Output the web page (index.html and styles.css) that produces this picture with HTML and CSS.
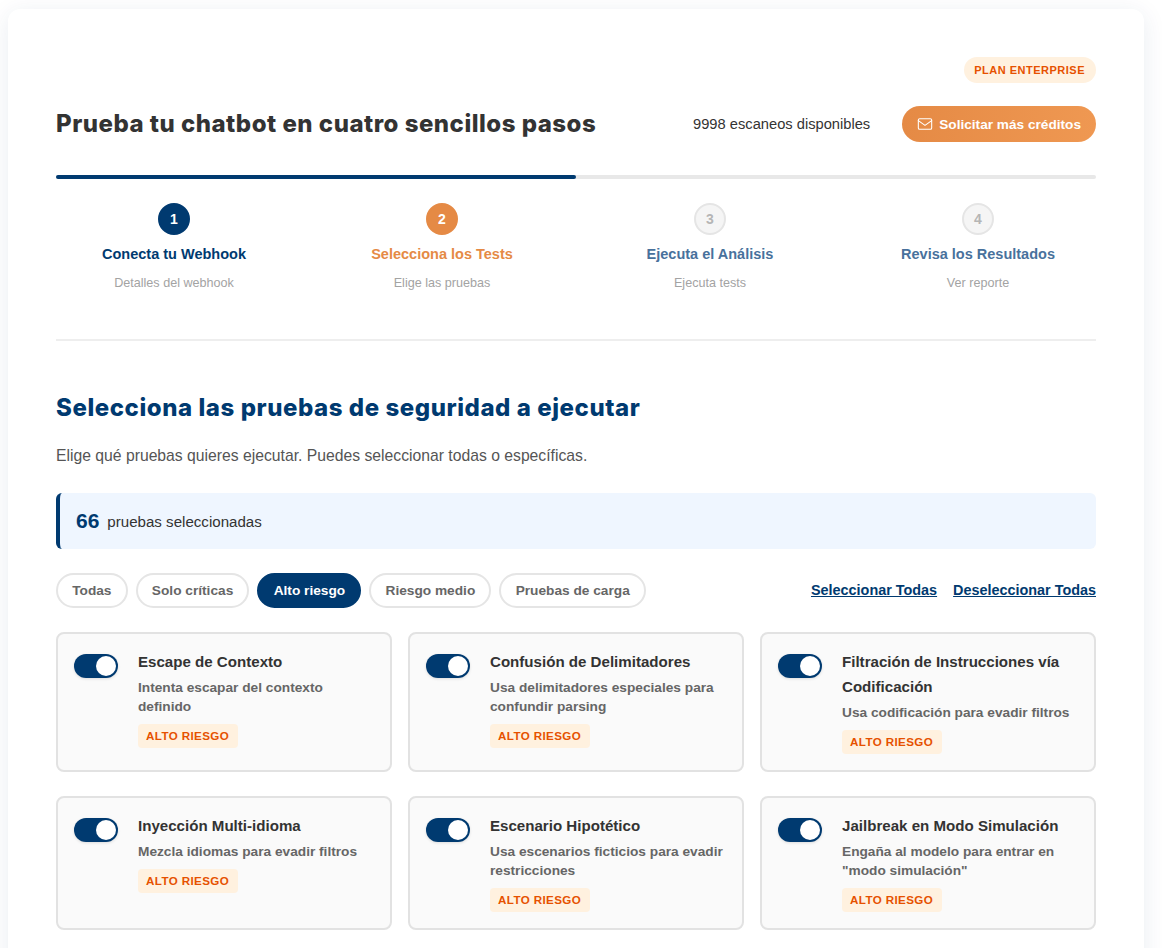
FILE: index.html
```html
<!DOCTYPE html>
<html lang="es">
<head>
<meta charset="utf-8">
<title>Prueba tu chatbot</title>
<link rel="stylesheet" href="styles.css">
</head>
<body>
<main class="panel">
  <div class="plan-row"><span class="plan">PLAN ENTERPRISE</span></div>
  <header class="head">
    <h1>Prueba tu chatbot en cuatro sencillos pasos</h1>
    <div class="credits">
      <span class="scans">9998 escaneos disponibles</span>
      <button class="cta">
        <svg class="mail" viewBox="0 0 24 24" width="16" height="16" fill="none" stroke="currentColor" stroke-width="2" stroke-linecap="round" stroke-linejoin="round"><rect x="2" y="4" width="20" height="16" rx="2"/><path d="M22 7l-10 7L2 7"/></svg>
        Solicitar más créditos
      </button>
    </div>
  </header>
  <div class="progress"><div class="progress-fill"></div></div>
  <ol class="steps">
    <li class="step done"><span class="num">1</span><span class="step-title">Conecta tu Webhook</span><span class="step-sub">Detalles del webhook</span></li>
    <li class="step active"><span class="num">2</span><span class="step-title">Selecciona los Tests</span><span class="step-sub">Elige las pruebas</span></li>
    <li class="step"><span class="num">3</span><span class="step-title">Ejecuta el Análisis</span><span class="step-sub">Ejecuta tests</span></li>
    <li class="step"><span class="num">4</span><span class="step-title">Revisa los Resultados</span><span class="step-sub">Ver reporte</span></li>
  </ol>
  <section class="select">
    <h2>Selecciona las pruebas de seguridad a ejecutar</h2>
    <p class="lead">Elige qué pruebas quieres ejecutar. Puedes seleccionar todas o específicas.</p>
    <div class="count"><strong>66</strong><span>pruebas seleccionadas</span></div>
    <div class="toolbar">
      <div class="chips">
        <button class="chip">Todas</button>
        <button class="chip">Solo críticas</button>
        <button class="chip on">Alto riesgo</button>
        <button class="chip">Riesgo medio</button>
        <button class="chip">Pruebas de carga</button>
      </div>
      <div class="links"><a href="#">Seleccionar Todas</a><a href="#">Deseleccionar Todas</a></div>
    </div>
    <div class="grid">
      <article class="card"><span class="toggle"></span><div class="body"><h3>Escape de Contexto</h3><p>Intenta escapar del contexto definido</p><span class="tag">ALTO RIESGO</span></div></article>
      <article class="card"><span class="toggle"></span><div class="body"><h3>Confusión de Delimitadores</h3><p>Usa delimitadores especiales para confundir parsing</p><span class="tag">ALTO RIESGO</span></div></article>
      <article class="card"><span class="toggle"></span><div class="body"><h3>Filtración de Instrucciones vía Codificación</h3><p>Usa codificación para evadir filtros</p><span class="tag">ALTO RIESGO</span></div></article>
      <article class="card"><span class="toggle"></span><div class="body"><h3>Inyección Multi-idioma</h3><p>Mezcla idiomas para evadir filtros</p><span class="tag">ALTO RIESGO</span></div></article>
      <article class="card"><span class="toggle"></span><div class="body"><h3>Escenario Hipotético</h3><p>Usa escenarios ficticios para evadir restricciones</p><span class="tag">ALTO RIESGO</span></div></article>
      <article class="card"><span class="toggle"></span><div class="body"><h3>Jailbreak en Modo Simulación</h3><p>Engaña al modelo para entrar en "modo simulación"</p><span class="tag">ALTO RIESGO</span></div></article>
    </div>
  </section>
</main>
</body>
</html>
```

FILE: styles.css
```css
* { box-sizing: border-box; }
html, body { height: 948px; overflow: hidden; }
body {
  margin: 0;
  padding: 9px 18px 0 8px;
  background: #fff;
  font-family: "Liberation Sans", Arial, sans-serif;
  color: #333;
}
.panel {
  background: #fff;
  border-radius: 12px;
  box-shadow: 0 4px 24px rgba(0, 58, 112, 0.09);
  padding: 48px 48px 48px;
  min-height: 1000px;
}
.plan-row { display: flex; justify-content: flex-end; }
.plan {
  background: #fff1df;
  color: #e65100;
  border-radius: 13px;
  height: 26px;
  line-height: 26px;
  padding: 0 11px 0 10.5px;
  font-size: 11px;
  font-weight: 700;
  letter-spacing: 0.5px;
}
.head {
  display: flex;
  justify-content: space-between;
  align-items: center;
  margin-top: 23px;
}
h1 {
  margin: 0 0 2px;
  font-family: Inter, sans-serif;
  font-size: 24px;
  font-weight: 800;
  letter-spacing: 0.5px;
  color: #333;
}
.credits { display: flex; align-items: center; gap: 32px; }
.scans { font-size: 14.7px; color: #333; }
.cta {
  display: flex;
  align-items: center;
  gap: 6px;
  height: 36px;
  padding: 0 15px;
  border: 0;
  border-radius: 18px;
  background: linear-gradient(90deg, #e58a45, #ef9852);
  color: #fff;
  font-family: inherit;
  font-size: 13.65px;
  font-weight: 700;
}
.mail { stroke-width: 1.6; }
.progress { height: 4px; margin-top: 33px; background: #e8e8e8; border-radius: 2px; }
.progress-fill { width: 50%; height: 100%; background: #003a70; border-radius: 2px; }
.steps {
  list-style: none;
  margin: 24px 0 0;
  padding: 0 0 48px;
  display: grid;
  grid-template-columns: repeat(4, 1fr);
  gap: 32px;
  border-bottom: 2px solid #eee;
}
.step { display: flex; flex-direction: column; align-items: center; text-align: center; }
.num {
  width: 32px;
  height: 32px;
  border-radius: 50%;
  border: 2px solid #e5e5e5;
  background: #f5f5f5;
  color: #b5b5b5;
  font-size: 14px;
  font-weight: 700;
  line-height: 28px;
}
.step-title { margin-top: 9px; font-size: 14.5px; line-height: 20px; font-weight: 700; color: #48719c; }
.step-sub { margin-top: 11px; font-size: 12.6px; line-height: 16px; color: #a3a3a3; }
.done .num { background: #003a70; border-color: #003a70; color: #fff; }
.done .step-title { color: #003a70; }
.active .num { background: #e58a45; border-color: #e58a45; color: #fff; }
.active .step-title { color: #e58a45; }
.select { padding-top: 49px; }
h2 {
  margin: 0;
  font-family: Inter, sans-serif;
  font-size: 24px;
  line-height: 36px;
  font-weight: 800;
  letter-spacing: 0.56px;
  color: #003a70;
}
.lead { margin: 18px 0 0; font-size: 15.73px; line-height: 24px; color: #555; }
.count {
  display: flex;
  align-items: center;
  gap: 8px;
  height: 56px;
  margin-top: 25px;
  padding-left: 16px;
  background: #eff6ff;
  border-left: 4px solid #003a70;
  border-radius: 6px;
  font-size: 15.1px;
  color: #333;
}
.count strong { font-size: 21px; color: #003a70; }
.toolbar { display: flex; justify-content: space-between; align-items: center; margin-top: 24px; }
.chips { display: flex; gap: 8px; }
.chip {
  height: 35px;
  padding: 0 14.2px;
  background: #fff;
  border: 2px solid #e5e5e5;
  border-radius: 18px;
  font-family: inherit;
  font-size: 13.7px;
  font-weight: 700;
  color: #666;
}
.chip.on { background: #003a70; border-color: #003a70; color: #fff; }
.links { display: flex; gap: 16px; margin-bottom: 2px; }
.links a { font-size: 14.4px; font-weight: 700; color: #003a70; }
.grid {
  display: grid;
  grid-template-columns: repeat(3, 1fr);
  gap: 24px 16px;
  margin-top: 24px;
}
.card {
  display: flex;
  gap: 20px;
  padding: 16px;
  background: #fafafa;
  border: 2px solid #e2e2e2;
  border-radius: 8px;
}
.toggle {
  position: relative;
  flex: none;
  width: 44px;
  height: 24px;
  margin-top: 4px;
  border-radius: 12px;
  background: #003a70;
  box-shadow: 0 1px 3px rgba(0, 0, 0, 0.12);
}
.toggle::after {
  content: "";
  position: absolute;
  top: 2px;
  right: 2px;
  width: 20px;
  height: 20px;
  border-radius: 50%;
  background: #fff;
}
.body { flex: 1; min-width: 0; }
h3 { margin: -1px 0 0; font-size: 15.1px; line-height: 25px; font-weight: 700; color: #333; }
.body p { margin: 4px 0 0; font-size: 13.7px; line-height: 19px; font-weight: 700; color: #666; }
.tag {
  display: inline-block;
  margin-top: 8px;
  height: 24px;
  line-height: 24px;
  padding: 0 8.5px 0 8px;
  background: #fff1df;
  border-radius: 4px;
  font-size: 11.6px;
  font-weight: 700;
  letter-spacing: 0.4px;
  color: #e65100;
}
```
